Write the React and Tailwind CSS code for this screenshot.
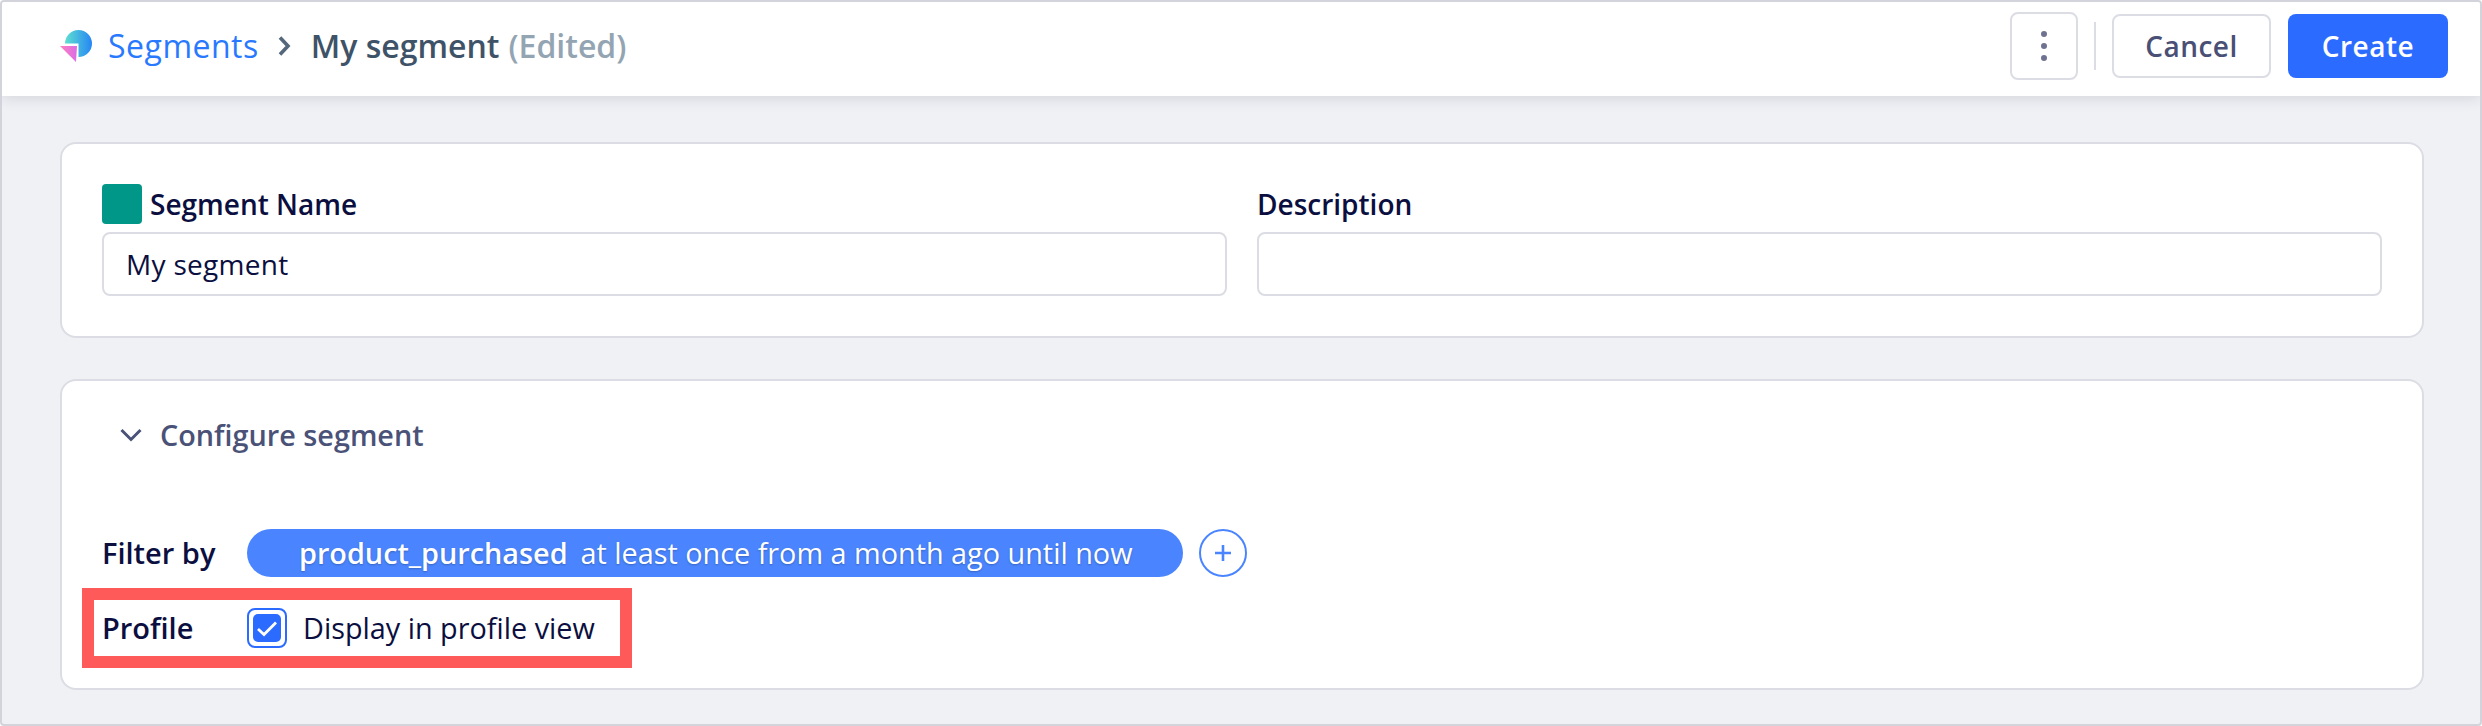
import React from "react";

function Logo() {
  return (
    <svg width="34" height="34" viewBox="0 0 34 34" className="shrink-0">
      <defs>
        <linearGradient id="lg1" x1="0" y1="0" x2="1" y2="0">
          <stop offset="0" stopColor="#5fe0cf" />
          <stop offset="1" stopColor="#2586f5" />
        </linearGradient>
        <linearGradient id="lg2" x1="0" y1="0" x2="1" y2="0">
          <stop offset="0" stopColor="#ff80bd" />
          <stop offset="1" stopColor="#d96ce6" />
        </linearGradient>
      </defs>
      <path d="M6 14.5A13.5 13.5 0 1 1 19.5 28V14.5Z" fill="url(#lg1)" />
      <path d="M1 17H18L17 33Z" fill="url(#lg2)" />
    </svg>
  );
}

export default function App() {
  return (
    <div className="w-[2482px] h-[726px] flex flex-col border-2 border-[#d3d4db] rounded-[4px] bg-[#f0f1f5] overflow-hidden font-['Open_Sans',sans-serif] text-[#0b0f40]">
      <header className="h-[94px] shrink-0 bg-white flex items-center pl-[57px] pr-[32px] pb-[6px] shadow-[0_2px_14px_rgba(30,35,70,0.14)] relative">
        <Logo />
        <span className="ml-[15px] text-[32px] tracking-[0.5px] text-[#2979ff] font-medium">Segments</span>
        <svg width="14" height="22" viewBox="0 0 14 22" className="ml-[18px]">
          <path d="M3 2.5L11 11L3 19.5" fill="none" stroke="#55677a" strokeWidth="3.6" />
        </svg>
        <span className="ml-[20px] text-[32px] text-[#3f5368] font-semibold">My segment</span>
        <span className="ml-[9px] text-[32px] text-[#93a4b2] font-semibold">(Edited)</span>
        <div className="ml-auto flex items-center">
          <button className="w-[68px] h-[68px] border-2 border-[#dcdde4] rounded-[8px] flex flex-col items-center justify-center gap-[6px]">
            <span className="w-[6px] h-[6px] rounded-full bg-[#6f7391]" />
            <span className="w-[6px] h-[6px] rounded-full bg-[#6f7391]" />
            <span className="w-[6px] h-[6px] rounded-full bg-[#6f7391]" />
          </button>
          <div className="w-[2px] h-[48px] bg-[#dcdde4] ml-[16px] mr-[16px]" />
          <button className="w-[159px] h-[64px] border-2 border-[#dcdde4] rounded-[8px] text-[28px] font-semibold text-[#4a4f75] tracking-[0.5px]">Cancel</button>
          <button className="w-[160px] h-[64px] ml-[17px] rounded-[8px] bg-[#2b6bff] text-[28px] font-semibold text-white tracking-[0.5px]">Create</button>
        </div>
      </header>

      <main className="flex-1 pl-[58px] pr-[56px] pt-[46px] flex flex-col gap-[41px]">
        <section className="h-[196px] bg-white border-2 border-[#dcdde4] rounded-[16px] px-[40px] pt-[40px] grid grid-cols-2 gap-x-[30px] items-start">
          <div>
            <div className="h-[40px] flex items-center">
              <span className="w-[40px] h-[40px] rounded-[4px] bg-[#009688]" />
              <span className="ml-[8px] text-[28px] font-semibold">Segment Name</span>
            </div>
            <div className="mt-[8px] h-[64px] border-2 border-[#dcdde4] rounded-[8px] flex items-center pl-[22px] text-[28px] tracking-[0.3px]">My segment</div>
          </div>
          <div>
            <div className="h-[40px] flex items-center text-[28px] font-semibold">Description</div>
            <div className="mt-[8px] h-[64px] border-2 border-[#dcdde4] rounded-[8px]" />
          </div>
        </section>

        <section className="h-[311px] bg-white border-2 border-[#dcdde4] rounded-[16px] px-[40px]">
          <div className="h-[108px] flex items-center pl-[18px] text-[#4a5278]">
            <svg width="22" height="14" viewBox="0 0 22 14">
              <path d="M1.5 2L11 11.5L20.5 2" fill="none" stroke="#4a5278" strokeWidth="3" />
            </svg>
            <span className="ml-[18px] text-[28.8px] font-semibold">Configure segment</span>
          </div>
          <div className="mt-[39px] h-[50px] flex items-center">
            <span className="w-[145px] text-[29px] font-semibold">Filter by</span>
            <div className="w-[936px] h-[48px] rounded-full bg-[#4a85ff] flex items-center pl-[52px] text-white text-[28.8px] [text-shadow:0_1px_2px_rgba(0,0,0,0.25)]">
              <span className="font-semibold">product_purchased</span>
              <span className="ml-[13px]">at least once from a month ago until now</span>
            </div>
            <div className="ml-[16px] w-[48px] h-[48px] rounded-full border-2 border-[#4a85ff] flex items-center justify-center">
              <svg width="18" height="18" viewBox="0 0 18 18">
                <path d="M9 1V17M1 9H17" fill="none" stroke="#4a85ff" strokeWidth="2.6" />
              </svg>
            </div>
          </div>
          <div className="relative mt-[30px] h-[40px] flex items-center">
            <div className="absolute left-[-20px] top-[-20px] w-[550px] h-[80px] border-[12px] border-[#ff5a5a]" />
            <span className="w-[145px] text-[29px] font-semibold">Profile</span>
            <span className="w-[40px] h-[40px] rounded-[8px] border-2 border-[#2b6bff] flex items-center justify-center">
              <span className="w-[28px] h-[28px] rounded-[5px] bg-[#2b6bff] flex items-center justify-center">
                <svg width="22" height="17" viewBox="0 0 22 17">
                  <path d="M2 9L8 14.5L20 2.5" fill="none" stroke="white" strokeWidth="2.8" />
                </svg>
              </span>
            </span>
            <span className="ml-[16px] text-[28.8px]">Display in profile view</span>
          </div>
        </section>
      </main>
    </div>
  );
}
